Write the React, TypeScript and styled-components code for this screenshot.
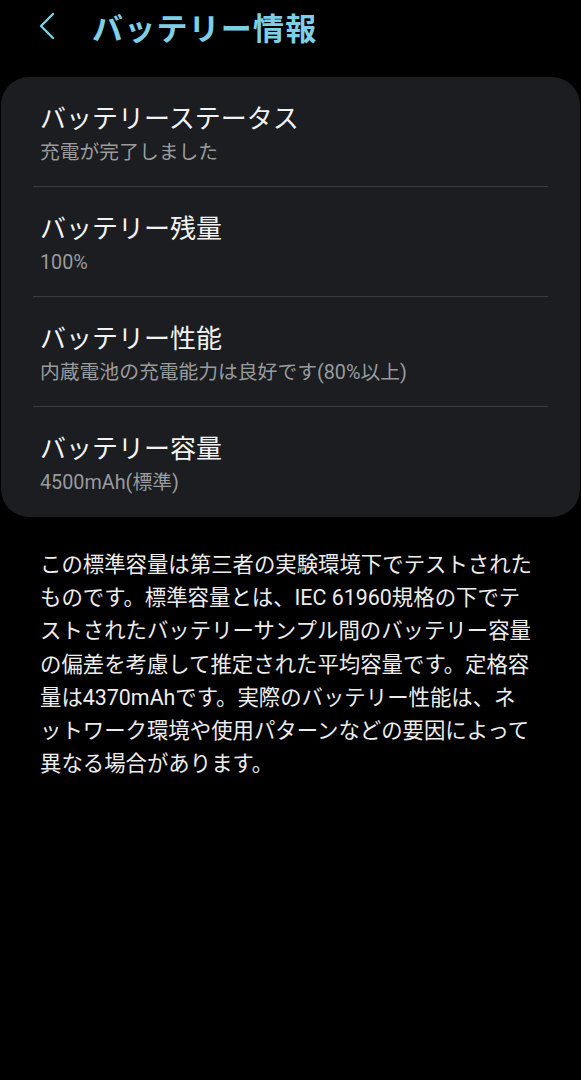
import styled, { createGlobalStyle } from 'styled-components';

const GlobalStyle = createGlobalStyle`
  html, body {
    margin: 0;
    padding: 0;
    background: #000;
  }
  body {
    font-family: Roboto, "Noto Sans CJK JP", sans-serif;
    -webkit-font-smoothing: antialiased;
  }
`;

const rows = [
  { title: 'バッテリーステータス', value: '充電が完了しました' },
  { title: 'バッテリー残量', value: '100%' },
  { title: 'バッテリー性能', value: '内蔵電池の充電能力は良好です(80%以上)' },
  { title: 'バッテリー容量', value: '4500mAh(標準)' },
];

const noteLines = [
  'この標準容量は第三者の実験環境下でテストされた',
  'ものです。標準容量とは、IEC 61960規格の下でテ',
  'ストされたバッテリーサンプル間のバッテリー容量',
  'の偏差を考慮して推定された平均容量です。定格容',
  '量は4370mAhです。実際のバッテリー性能は、ネ',
  'ットワーク環境や使用パターンなどの要因によって',
  '異なる場合があります。',
];

const App = () => {
  return (
    <Page>
      <GlobalStyle />
      <Header>
        <BackButton aria-label="戻る">
          <svg width="18" height="28" viewBox="0 0 18 28" fill="none">
            <path d="M15 2 L3 14 L15 26" stroke="#7ecfe6" strokeWidth="2.4" strokeLinecap="round" strokeLinejoin="round" />
          </svg>
        </BackButton>
        <Title>バッテリー情報</Title>
      </Header>

      <Card>
        {rows.map((row, i) => (
          <Row key={row.title} $last={i === rows.length - 1}>
            <RowTitle>{row.title}</RowTitle>
            <RowValue>{row.value}</RowValue>
          </Row>
        ))}
      </Card>

      <Note>
        {noteLines.map((line) => (
          <NoteLine key={line}>{line}</NoteLine>
        ))}
      </Note>
    </Page>
  );
};
export default App;

const Page = styled.div`
  width: 581px;
  min-height: 1080px;
  background: #000;
  display: flex;
  flex-direction: column;
`;

const Header = styled.div`
  display: flex;
  align-items: center;
  height: 52px;
  padding-left: 38px;
`;

const BackButton = styled.button`
  display: flex;
  align-items: center;
  background: none;
  border: none;
  padding: 0;
  width: 54px;
  height: 40px;
  cursor: pointer;
`;

const Title = styled.h1`
  margin: 0;
  font-size: 31px;
  font-weight: 700;
  color: #7ecfe6;
  letter-spacing: 1.2px;
`;

const Card = styled.div`
  margin: 25px 1px 0 1px;
  background: #1b1d20;
  border-radius: 28px;
  padding: 0 32px;
  display: flex;
  flex-direction: column;
`;

const Row = styled.div<{ $last: boolean }>`
  display: flex;
  flex-direction: column;
  justify-content: center;
  height: 110px;
  padding-left: 7px;
  padding-top: 5px;
  border-bottom: ${({ $last }) => ($last ? 'none' : '1.5px solid #3a3c40')};
  box-sizing: border-box;
`;

const RowTitle = styled.div`
  font-size: 26px;
  color: #f2f2f2;
  line-height: 34px;
`;

const RowValue = styled.div`
  font-size: 19.8px;
  color: #9a9b9d;
  line-height: 28px;
  margin-top: 3px;
`;

const Note = styled.div`
  margin: 31px 0 0 40px;
  font-size: 21.4px;
  line-height: 33.2px;
  color: #ededed;
`;

const NoteLine = styled.div`
  white-space: nowrap;
`;
